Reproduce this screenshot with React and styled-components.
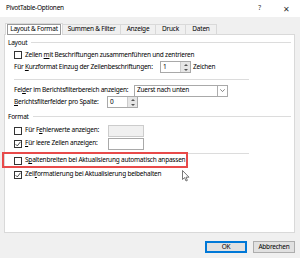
import React from 'react';
import styled, { createGlobalStyle } from 'styled-components';

const Global = createGlobalStyle`
  html, body { margin: 0; padding: 0; }
  body {
    font-family: "Noto Sans", "Open Sans", sans-serif;
    font-size: 6.5px;
    letter-spacing: -0.22px;
    color: #000;
    background: #f0f0f0;
  }
`;

const Window = styled.div`
  position: relative;
  width: 300px;
  height: 258px;
  background: #f0f0f0;
  display: flex;
  flex-direction: column;
  overflow: hidden;
`;

const TitleBar = styled.div`
  height: 17px;
  background: #fff;
  display: flex;
  align-items: center;
  padding-left: 6px;
`;

const Title = styled.div`
  flex: 1;
  line-height: 1;
`;

const TitleButton = styled.div`
  width: 27px;
  text-align: center;
  font-size: ${props => props.size || '6.5px'};
  color: #333;
  line-height: 1;
`;

const TabStrip = styled.div`
  display: flex;
  align-items: flex-end;
  height: 12px;
  margin-top: 5px;
  padding-left: 5px;
`;

const Tab = styled.div`
  width: ${props => props.w}px;
  height: ${props => (props.active ? '12px' : '10px')};
  display: flex;
  align-items: center;
  justify-content: center;
  border: 1px solid #d9d9d9;
  border-bottom: none;
  border-left: ${props => (props.first || props.active ? '1px solid #d9d9d9' : 'none')};
  background: ${props => (props.active ? '#fff' : '#f0f0f0')};
  position: relative;
  z-index: ${props => (props.active ? 2 : 1)};
  margin-bottom: ${props => (props.active ? '-1px' : '0')};
  box-sizing: border-box;
  line-height: 1;
  white-space: nowrap;
`;

const FocusBox = styled.span`
  border: 1px solid #999;
  padding: 1px 2px;
`;

const Panel = styled.div`
  margin: 0 5px 0 4px;
  height: 199px;
  background: #fff;
  border: 1px solid #d9d9d9;
  box-sizing: border-box;
  display: flex;
  flex-direction: column;
  padding-left: 3px;
  padding-right: 3px;
`;

const GroupLabel = styled.div`
  height: ${props => props.h || 14}px;
  display: flex;
  align-items: center;
  gap: 4px;
  &::after {
    content: '';
    flex: 1;
    height: 1px;
    background: #dcdcdc;
  }
`;

const Row = styled.div`
  position: relative;
  height: ${props => props.h || 12}px;
  display: flex;
  align-items: center;
  padding-left: 6px;
  white-space: nowrap;
  line-height: 1;
`;

const Label = styled.span`
  white-space: pre;
  ${props => props.w && `width: ${props.w}px; flex-shrink: 0;`}
`;

const Rule = styled.div`
  height: ${props => props.h || 12}px;
  display: flex;
  align-items: ${props => props.align || 'center'};
  padding-left: 6px;
  &::before {
    content: '';
    width: 235px;
    height: 1px;
    background: #dcdcdc;
  }
`;

const Box = styled.span`
  width: 8px;
  height: 8px;
  box-sizing: border-box;
  border: 1px solid #333;
  margin-right: 3px;
  flex-shrink: 0;
  display: flex;
  align-items: center;
  justify-content: center;
  background: #fff;
`;

const Key = styled.span`
  text-decoration: underline;
`;

const Field = styled.div`
  width: ${props => props.w}px;
  height: 12px;
  margin-top: ${props => props.mt || 0}px;
  box-sizing: border-box;
  border: 1px solid ${props => (props.disabled ? '#cccccc' : '#a9a9a9')};
  background: ${props => (props.disabled ? '#f0f0f0' : '#fff')};
  display: flex;
  align-items: center;
  padding-left: 2px;
  flex-shrink: 0;
`;

const FieldValue = styled.span`
  flex: 1;
`;

const Suffix = styled.span`
  margin-left: 2px;
`;

const Spinner = styled.div`
  width: 9px;
  height: 100%;
  display: flex;
  flex-direction: column;
  background: #e6e6e6;
  border-left: 1px solid #ccc;
`;

const SpinHalf = styled.div`
  flex: 1;
  display: flex;
  align-items: center;
  justify-content: center;
  &::before {
    content: '';
    border-left: 2px solid transparent;
    border-right: 2px solid transparent;
    ${props => (props.down ? 'border-top: 2px solid #555;' : 'border-bottom: 2px solid #555;')}
  }
`;

const DropArrow = styled.div`
  width: 9px;
  height: 100%;
  border-left: 1px solid #adadad;
  display: flex;
  align-items: center;
  justify-content: center;
`;

const Highlight = styled.div`
  position: absolute;
  left: -6px;
  top: -2px;
  width: 186px;
  height: 16px;
  border: 2px solid #e84a4a;
  box-sizing: border-box;
  pointer-events: none;
`;

const Footer = styled.div`
  display: flex;
  justify-content: flex-end;
  gap: 6px;
  padding: 8px 5px 0 0;
`;

const Button = styled.div`
  width: 42px;
  height: 12px;
  box-sizing: border-box;
  background: #e1e1e1;
  border: 1px solid ${props => (props.primary ? '#0078d7' : '#adadad')};
  ${props => props.primary && 'box-shadow: inset 0 0 0 1px #0078d7;'}
  display: flex;
  align-items: center;
  justify-content: center;
  line-height: 1;
`;

const Cursor = styled.svg`
  position: absolute;
  left: 182px;
  top: 170px;
`;

const Check = () => (
  <svg width="6" height="6" viewBox="0 0 6 6">
    <path d="M0.6 3.2 L2.3 4.9 L5.5 0.8" fill="none" stroke="#333" strokeWidth="0.9" />
  </svg>
);

const Checkbox = ({ checked }) => <Box>{checked && <Check />}</Box>;

const Spin = () => (
  <Spinner>
    <SpinHalf />
    <SpinHalf down />
  </Spinner>
);

const App = () => (
  <>
    <Global />
    <Window>
      <TitleBar>
        <Title>PivotTable-Optionen</Title>
        <TitleButton>?</TitleButton>
        <TitleButton size="8px">✕</TitleButton>
      </TitleBar>

      <TabStrip>
        <Tab active first w={58}><FocusBox>Layout &amp; Format</FocusBox></Tab>
        <Tab w={58}>Summen &amp; Filter</Tab>
        <Tab w={35}>Anzeige</Tab>
        <Tab w={30}>Druck</Tab>
        <Tab w={31}>Daten</Tab>
      </TabStrip>

      <Panel>
        <GroupLabel>Layout</GroupLabel>
        <Row>
          <Checkbox />
          <Label>Zellen <Key>m</Key>it Beschriftungen zusammenführen und zentrieren</Label>
        </Row>
        <Row>
          <Label w={146}>Für <Key>K</Key>urzformat Einzug der Zeilenbeschriftungen:</Label>
          <Field w={31}>
            <FieldValue>1</FieldValue>
            <Spin />
          </Field>
          <Suffix>Zeichen</Suffix>
        </Row>
        <Rule />
        <Row h={11}>
          <Label w={120}>Fel<Key>d</Key>er im Berichtsfilterbereich anzeigen:</Label>
          <Field w={94}>
            <FieldValue>Zuerst nach unten</FieldValue>
            <DropArrow>
              <svg width="5" height="3" viewBox="0 0 5 3">
                <path d="M0.3 0.3 L2.5 2.6 L4.7 0.3" fill="none" stroke="#555" strokeWidth="0.7" />
              </svg>
            </DropArrow>
          </Field>
        </Row>
        <Row>
          <Label w={93}><Key>B</Key>erichtsfilterfelder pro Spalte:</Label>
          <Field w={31}>
            <FieldValue>0</FieldValue>
            <Spin />
          </Field>
        </Row>
        <GroupLabel h={16}>Format</GroupLabel>
        <Row h={13}>
          <Checkbox />
          <Label w={83}>Für F<Key>e</Key>hlerwerte anzeigen:</Label>
          <Field w={36} disabled />
        </Row>
        <Row h={13}>
          <Checkbox checked />
          <Label w={83}><Key>F</Key>ür leere Zellen anzeigen:</Label>
          <Field w={36} mt={1} />
        </Row>
        <Rule h={4} align="flex-end" />
        <Row h={13}>
          <Checkbox />
          <Label>S<Key>p</Key>altenbreiten bei Aktualisierung automatisch anpassen</Label>
          <Highlight />
        </Row>
        <Row h={15}>
          <Checkbox checked />
          <Label>Zell<Key>f</Key>ormatierung bei Aktualisierung beibehalten</Label>
        </Row>
      </Panel>

      <Footer>
        <Button primary>OK</Button>
        <Button>Abbrechen</Button>
      </Footer>

      <Cursor width="8" height="12" viewBox="0 0 8 12">
        <path d="M0.5 0.5 L0.5 9.5 L2.6 7.6 L4 11 L5.4 10.4 L4 7.2 L7 7.2 Z" fill="#fff" stroke="#555" strokeWidth="0.8" />
      </Cursor>
    </Window>
  </>
);

export default App;
